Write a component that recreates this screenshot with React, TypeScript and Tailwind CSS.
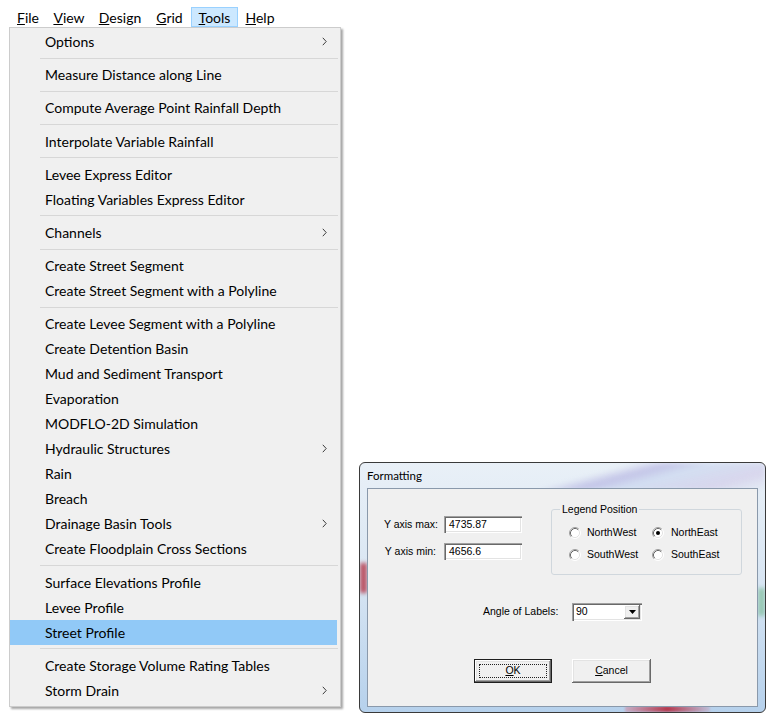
import React from 'react';

type Entry = { label: string; sub?: boolean; active?: boolean } | 'sep';

const toolsMenu: Entry[] = [
  { label: 'Options', sub: true },
  'sep',
  { label: 'Measure Distance along Line' },
  'sep',
  { label: 'Compute Average Point Rainfall Depth' },
  'sep',
  { label: 'Interpolate Variable Rainfall' },
  'sep',
  { label: 'Levee Express Editor' },
  { label: 'Floating Variables Express Editor' },
  'sep',
  { label: 'Channels', sub: true },
  'sep',
  { label: 'Create Street Segment' },
  { label: 'Create Street Segment with a Polyline' },
  'sep',
  { label: 'Create Levee Segment with a Polyline' },
  { label: 'Create Detention Basin' },
  { label: 'Mud and Sediment Transport' },
  { label: 'Evaporation' },
  { label: 'MODFLO-2D Simulation' },
  { label: 'Hydraulic Structures', sub: true },
  { label: 'Rain' },
  { label: 'Breach' },
  { label: 'Drainage Basin Tools', sub: true },
  { label: 'Create Floodplain Cross Sections' },
  'sep',
  { label: 'Surface Elevations Profile' },
  { label: 'Levee Profile' },
  { label: 'Street Profile', active: true },
  'sep',
  { label: 'Create Storage Volume Rating Tables' },
  { label: 'Storm Drain', sub: true },
];

// menubar entries: accelerator letter, rest, box width
const menubar = [
  { key: 'F', rest: 'ile', w: 'w-[36px]' },
  { key: 'V', rest: 'iew', w: 'w-[46px]' },
  { key: 'D', rest: 'esign', w: 'w-[56px]' },
  { key: 'G', rest: 'rid', w: 'w-[43px]' },
  { key: 'T', rest: 'ools', w: 'w-[47px]', open: true },
  { key: 'H', rest: 'elp', w: 'w-[44px]' },
];

function Chevron() {
  return (
    <svg width="5" height="9" viewBox="0 0 5 9" fill="none">
      <path d="M0.8 0.8L4.2 4.5L0.8 8.2" stroke="#3c3c3c" strokeWidth="1" />
    </svg>
  );
}

function Radio({ checked }: { checked?: boolean }) {
  return (
    <svg width="12" height="12" viewBox="0 0 12 12" className="shrink-0">
      <circle cx="6" cy="6" r="5" fill="#fff" />
      <path d="M2.11 9.89A5.5 5.5 0 0 1 9.89 2.11" stroke="#a0a0a0" fill="none" />
      <path d="M9.89 2.11A5.5 5.5 0 0 1 2.11 9.89" stroke="#ffffff" fill="none" />
      <path d="M2.82 9.18A4.5 4.5 0 0 1 9.18 2.82" stroke="#696969" fill="none" />
      <path d="M9.18 2.82A4.5 4.5 0 0 1 2.82 9.18" stroke="#e3e3e3" fill="none" />
      {checked && <circle cx="6" cy="6" r="2" fill="#000" />}
    </svg>
  );
}

const sunken =
  'bg-white shadow-[inset_1px_1px_0_#a0a0a0,inset_2px_2px_0_#696969,inset_-1px_-1px_0_#ffffff,inset_-2px_-2px_0_#e3e3e3]';
const raised =
  'bg-[#f0f0f0] shadow-[inset_-1px_-1px_0_#696969,inset_1px_1px_0_#ffffff,inset_-2px_-2px_0_#a0a0a0,inset_2px_2px_0_#e3e3e3]';

function ToolsMenu() {
  return (
    <div className="ml-[9px] w-[332px] border border-[#cccccc] bg-[#f0f0f0] pt-[1px] pb-[3px] shadow-[2px_2px_2px_rgba(0,0,0,0.35)]">
      {toolsMenu.map((e, i) =>
        e === 'sep' ? (
          <div key={i} className="flex h-[8.2px] items-center pl-[30px] pr-[2px]">
            <div className="h-px w-full bg-[#d7d7d7]" />
          </div>
        ) : (
          <div
            key={i}
            className={`flex h-[25px] items-center justify-between pl-[35px] pr-[13px] text-[14px] text-black ${
              e.active ? 'mr-[3px] bg-[#91c9f7]' : ''
            }`}
          >
            <span>{e.label}</span>
            {e.sub && <Chevron />}
          </div>
        )
      )}
    </div>
  );
}

function Formatting() {
  return (
    <div className="relative mb-[7px] ml-[18px] flex h-[251px] w-[407px] shrink-0 flex-col overflow-hidden rounded-[6px] border border-[#3a3a3a] bg-[linear-gradient(180deg,#e9f0f7_0%,#d9e6f3_45%,#b6d1ec_100%)] px-[7px] pb-[5px] font-['Liberation_Sans',Arial,sans-serif]">
      {/* glass bleed from the window behind */}
      <div className="absolute left-[175px] top-0 h-[27px] w-[230px] bg-[linear-gradient(165deg,transparent_0%,transparent_30%,rgba(130,120,205,0.35)_42%,rgba(165,185,230,0.3)_55%,rgba(190,170,220,0.35)_80%,transparent_100%)] blur-[2px]" />
      <div className="absolute left-0 top-[100px] h-[30px] w-[7px] bg-[#b22a3c] opacity-80 blur-[2px]" />
      <div className="absolute bottom-0 left-[265px] h-[6px] w-[85px] bg-[linear-gradient(90deg,rgba(220,120,140,0.4),rgba(180,30,50,0.85),rgba(220,120,140,0.2))] blur-[1px]" />
      <div className="absolute right-0 top-[125px] h-[28px] w-[7px] bg-[#6cb585] opacity-60 blur-[2px]" />

      <div className="relative flex h-[25px] items-center font-['Lato',sans-serif] text-[11.5px] text-black">
        Formatting
      </div>

      <div className="relative flex-1 border border-[#8a99ab] bg-[#f0f0f0] text-[10.5px] text-black">
        <div className="flex items-start pt-[14px]">
          <div className="ml-[10px] mt-[13px] grid grid-cols-[60px_78px] items-center gap-x-[6px] gap-y-[10px] whitespace-nowrap">
            <span className="text-right">Y axis max:</span>
            <div className={`h-[17px] pl-[5px] leading-[17px] ${sunken}`}>4735.87</div>
            <span className="pr-[2px] text-right">Y axis min:</span>
            <div className={`h-[17px] pl-[5px] leading-[17px] ${sunken}`}>4656.6</div>
          </div>

          <fieldset className="ml-[29px] h-[72px] w-[191px] rounded-[3px] border border-[#d0d7dd]">
            <legend className="ml-[8px] px-[2px] leading-[12px]">Legend Position</legend>
            <div className="grid grid-cols-[83px_auto] pl-[17px] pt-[7px]">
              <label className="flex h-[22px] items-center gap-[6px]">
                <Radio /> NorthWest
              </label>
              <label className="flex h-[22px] items-center gap-[7px]">
                <Radio checked /> NorthEast
              </label>
              <label className="flex h-[22px] items-center gap-[6px]">
                <Radio /> SouthWest
              </label>
              <label className="flex h-[22px] items-center gap-[7px]">
                <Radio /> SouthEast
              </label>
            </div>
          </fieldset>
        </div>

        <div className="mt-[28px] flex items-center pl-[115px]">
          <span className="w-[89px] whitespace-nowrap">Angle of Labels:</span>
          <div className={`flex h-[18px] w-[70px] items-center justify-between p-[2px] ${sunken}`}>
            <span className="pl-[2px]">90</span>
            <div className={`flex h-[14px] w-[16px] items-center justify-center ${raised}`}>
              <svg width="7" height="4" viewBox="0 0 7 4">
                <path d="M0 0H7L3.5 4Z" fill="#000" />
              </svg>
            </div>
          </div>
        </div>

        <div className="mt-[38px] flex pl-[106px]">
          <button className={`relative h-[24px] w-[78px] border border-[#1e1e1e] ${raised}`}>
            <span className="absolute inset-[4px] border border-dotted border-[#222]" />
            <span className="relative">
              <span className="underline">O</span>K
            </span>
          </button>
          <button className={`ml-[20px] h-[24px] w-[79px] ${raised}`}>
            <span className="underline">C</span>ancel
          </button>
        </div>
      </div>
    </div>
  );
}

export default function App() {
  return (
    <div className="flex h-[720px] w-[775px] items-end overflow-hidden bg-white font-['Lato',sans-serif]">
      <div className="flex h-full flex-col">
        {/* Menu bar */}
        <div className="flex h-[27px] pl-[10px] pt-[7px] text-[14px] text-black">
          {menubar.map((m) => (
            <div
              key={m.key}
              className={`flex h-[20px] items-center justify-center ${m.w} ${
                m.open ? 'border border-[#99d1ff] bg-[#cce8ff]' : ''
              }`}
            >
              <span>
                <span className="underline">{m.key}</span>
                {m.rest}
              </span>
            </div>
          ))}
        </div>
        <ToolsMenu />
      </div>
      <Formatting />
    </div>
  );
}
